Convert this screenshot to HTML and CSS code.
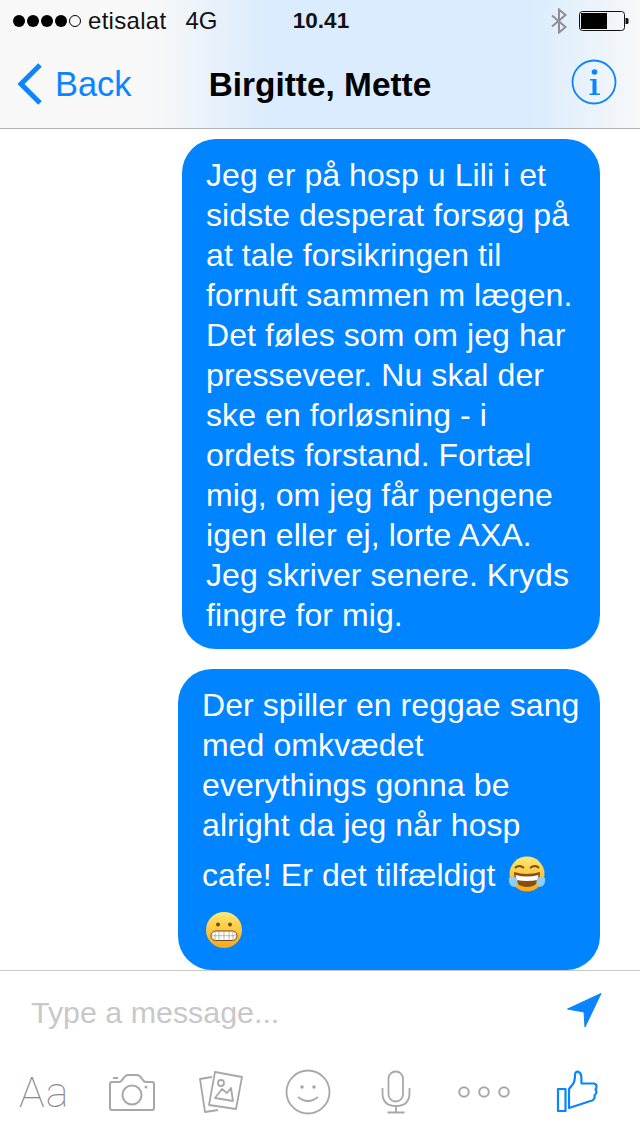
FILE: index.html
```html
<!DOCTYPE html>
<html lang="da">
<head>
<meta charset="utf-8">
<title>Birgitte, Mette</title>
<link rel="stylesheet" href="styles.css">
</head>
<body>
<div class="phone">
  <header class="top">
    <div class="status">
      <div class="status-left">
        <span class="signal"><i></i><i></i><i></i><i></i><i class="off"></i></span>
        <span class="carrier">etisalat</span>
        <span class="net">4G</span>
      </div>
      <div class="clock">10.41</div>
      <div class="status-right">
        <svg class="bt" width="18" height="26" viewBox="0 0 18 26"><path d="M2 7.500 15.500 19 9 24.500V1.500L15.500 7 2 18.500" fill="none" stroke="#8e8e93" stroke-width="2"/></svg>
        <svg class="batt" width="50" height="20" viewBox="0 0 50 20"><rect x="0.500" y="0.500" width="45" height="19" rx="3" fill="none" stroke="#111" stroke-width="1"/><rect x="2" y="2" width="26" height="16" fill="#000"/><path d="M46.500 7h1.500a1.500 1.500 0 0 1 1.500 1.500v3a1.500 1.500 0 0 1-1.500 1.500h-1.500z" fill="#111"/></svg>
      </div>
    </div>
    <nav class="nav">
      <div class="back">
        <svg width="28" height="44" viewBox="0 0 28 44"><path d="M25 3 6 22 25 41" fill="none" stroke="#0a84ff" stroke-width="5"/></svg>
        <span>Back</span>
      </div>
      <div class="title">Birgitte, Mette</div>
      <svg class="info" width="46" height="46" viewBox="0 0 46 46"><circle cx="23" cy="23" r="21.500" fill="none" stroke="#0a84ff" stroke-width="1.800"/><circle cx="23.500" cy="13" r="2.800" fill="#0a84ff"/><path d="M19 20h6.500v14.500H29V36H18.500v-1.500h3V21.500H19z" fill="#0a84ff"/></svg>
    </nav>
  </header>

  <main class="thread">
    <div class="bubble first">Jeg er på hosp u Lili i et<br>sidste desperat forsøg på<br>at tale forsikringen til<br>fornuft sammen m lægen.<br>Det føles som om jeg har<br>presseveer. Nu skal der<br>ske en forløsning - i<br>ordets forstand. Fortæl<br>mig, om jeg får pengene<br>igen eller ej, lorte AXA.<br>Jeg skriver senere. Kryds<br>fingre for mig.</div>
    <div class="bubble second">
      <div>Der spiller en reggae sang<br>med omkvædet<br>everythings gonna be<br>alright da jeg når hosp</div>
      <div class="emoji-line">cafe! Er det tilfældigt
        <svg class="emoji laugh" width="38" height="38" viewBox="0 0 38 38"><defs><linearGradient id="face" x1="0" y1="0" x2="0" y2="1"><stop offset="0" stop-color="#ffe873"/><stop offset="1" stop-color="#f7a814"/></linearGradient></defs><circle cx="19" cy="19" r="17.500" fill="url(#face)"/><path d="M7 13q4-4 9 0M22 13q5-4 9 0" fill="none" stroke="#7a4a10" stroke-width="1.800"/><path d="M6 17q13 4 26 0q0 15-13 15T6 17z" fill="#8a4f10"/><path d="M7.500 20q11.500 3 23 0l-1 5q-10.500 2-21 0z" fill="#fff"/><path d="M1 23q5-3 8 1q2 6-3 8q-6-1-5-9zM37 23q-5-3-8 1q-2 6 3 8q6-1 5-9z" fill="#8fcff5"/></svg>
      </div>
      <div class="emoji-line solo">
        <svg class="emoji" width="38" height="38" viewBox="0 0 38 38"><defs><linearGradient id="face2" x1="0" y1="0" x2="0" y2="1"><stop offset="0" stop-color="#ffe873"/><stop offset="1" stop-color="#f7a814"/></linearGradient></defs><circle cx="19" cy="19" r="18" fill="url(#face2)"/><circle cx="13" cy="13.500" r="2" fill="#7a4a10"/><circle cx="25" cy="13.500" r="2" fill="#7a4a10"/><rect x="6" y="20" width="26" height="9.500" rx="4.700" fill="#fff" stroke="#6b4a20" stroke-width="1"/><path d="M6.500 24.700h25M10 20v9.500M14 20v9.500M19 20v9.500M24 20v9.500M28 20v9.500" stroke="#a89a80" stroke-width="0.700"/></svg>
      </div>
    </div>
  </main>

  <section class="composer">
    <div class="input-row">
      <span class="placeholder">Type a message...</span>
      <svg class="send" width="36" height="36" viewBox="0 0 36 36"><path d="M1.500 16 35 0.500 19 34 18 19z" fill="#0a84ff" stroke="#0a84ff" stroke-width="1" stroke-linejoin="round"/></svg>
    </div>
    <div class="tools">
      <span class="aa">Aa</span>
      <svg class="cam" width="46" height="38" viewBox="0 0 46 38" fill="none" stroke="#a8a8a8" stroke-width="2"><path d="M1 35V11q0-2 2-2h7q2 0 3-2l2.500-3q1.500-2 3.500-2h9q2 0 3.500 2L34 7q1 2 3 2h6q2 0 2 2v24q0 2-2 2H3q-2 0-2-2z"/><circle cx="23" cy="22" r="9.500"/><circle cx="37" cy="14" r="1.500" fill="#a8a8a8" stroke="none"/><path d="M4 5h5"/></svg>
      <svg class="gal" width="44" height="44" viewBox="0 0 44 44" fill="none" stroke="#a8a8a8" stroke-width="1.800" stroke-linejoin="round"><path d="M13 7 1 9l5 33 13-2"/><path d="M16 2l27 5-6 32-27-4z" fill="#fff"/><circle cx="22" cy="13" r="3"/><path d="M16 28l7-9 5 4 4-5 2 13z"/></svg>
      <svg class="smile" width="46" height="46" viewBox="0 0 46 46" fill="none" stroke="#a8a8a8" stroke-width="1.800"><circle cx="23" cy="23" r="21.500"/><circle cx="17" cy="18" r="1.800" fill="#a8a8a8" stroke="none"/><circle cx="29" cy="18" r="1.800" fill="#a8a8a8" stroke="none"/><path d="M13 28q10 8 20 0"/></svg>
      <svg class="mic" width="30" height="44" viewBox="0 0 30 44" fill="none" stroke="#a8a8a8" stroke-width="1.800"><rect x="7.500" y="1.500" width="14.500" height="30" rx="7.200"/><path d="M1.500 18v5q0 13 13.500 13t13.500-13v-5M15 36v6M6.500 42.500h17"/></svg>
      <svg class="dots" width="54" height="12" viewBox="0 0 54 12" fill="none" stroke="#a8a8a8" stroke-width="2"><circle cx="6" cy="6" r="4.800"/><circle cx="26" cy="6" r="4.800"/><circle cx="46" cy="6" r="4.800"/></svg>
      <svg class="thumb" width="42" height="44" viewBox="0 0 42 44" fill="none" stroke="#0a84ff" stroke-width="2.200" stroke-linejoin="round"><rect x="2" y="19" width="7.500" height="22"/><path d="M13 38V19l4-5q2-3 2-9 0-3 2.500-3.500 3.500 1 3.800 5l.2 7h12.500q2.500.5 2.500 3 0 2-1 3 1.500 1.500.5 4-1 1.500-1.500 2 .5 2.500-1 4-1 1.500-3 1.500z"/></svg>
    </div>
  </section>
</div>
</body>
</html>
```
FILE: styles.css
```css
* { box-sizing: border-box; }
html, body { margin: 0; padding: 0; background: #fff; }
body { font-family: "Liberation Sans", Arial, sans-serif; }
.phone { width: 640px; height: 1136px; display: flex; flex-direction: column; overflow: hidden; }

.top {
  height: 129px;
  flex: none;
  border-bottom: 1px solid #b2b2b2;
  background: linear-gradient(90deg, #f8f8f8 0, #f8f8f8 150px, #daecfe 270px, #daecfe 530px, #f8f8f8 640px);
}
.status { height: 40px; display: grid; grid-template-columns: 1fr auto 1fr; align-items: center; padding: 1px 11px 0 13px; }
.status-left { display: flex; align-items: center; font-size: 24px; color: #111; }
.signal { display: flex; gap: 2px; margin-right: 7px; }
.signal i { width: 12px; height: 12px; border-radius: 50%; background: #000; display: block; }
.signal i.off { background: transparent; border: 1px solid #000; }
.carrier { letter-spacing: 0.3px; }
.net { margin-left: 19px; }
.clock { font-size: 22.5px; font-weight: 700; color: #111; }
.status-right { display: flex; justify-content: flex-end; align-items: center; gap: 11px; }

.nav { height: 88px; display: flex; align-items: center; justify-content: space-between; padding: 0 23px 0 15px; position: relative; }
.back { display: flex; align-items: center; gap: 12px; color: #0a84ff; font-size: 34.4px; }
.title { position: absolute; left: 0; right: 0; text-align: center; font-size: 33.4px; font-weight: 700; color: #000; top: 26px; }
.info { position: relative; margin-bottom: 4px; }

.thread { flex: 1; display: flex; flex-direction: column; align-items: flex-end; gap: 20px; padding: 10px 40px 0 0; overflow: hidden; }
.bubble { background: #0084ff; color: #fff; font-size: 32px; letter-spacing: 0.08px; line-height: 40px; border-radius: 34px; white-space: nowrap; flex: none; }
.first { width: 418px; height: 510px; padding: 16px 0 0 24px; }
.second { width: 422px; height: 301px; padding: 16px 0 0 24px; }
.emoji-line { height: 60px; display: flex; align-items: center; gap: 12px; }
.emoji-line.solo { height: 50px; padding-left: 3px; }
.emoji { display: block; flex: none; }
.laugh { margin-top: -3px; }

.composer { flex: none; height: 166px; border-top: 1px solid #c8c8c8; }
.input-row { height: 84px; display: flex; align-items: center; justify-content: space-between; padding: 0 38px 0 31px; }
.placeholder { font-size: 30.4px; color: #c8c8c8; margin-bottom: 1px; }
.send { margin-bottom: 4px; }
.tools { height: 74px; display: flex; align-items: center; padding-left: 19px; }
.aa { font-family: Roboto, "Liberation Sans", sans-serif; font-size: 43px; letter-spacing: 1px; font-weight: 100; color: #888; width: 49px; }
.cam { margin-left: 41px; }
.gal { margin-left: 44px; }
.smile { margin-left: 42px; }
.mic { margin-left: 50px; }
.dots { margin-left: 47px; }
.thumb { margin-left: 44px; }
```
